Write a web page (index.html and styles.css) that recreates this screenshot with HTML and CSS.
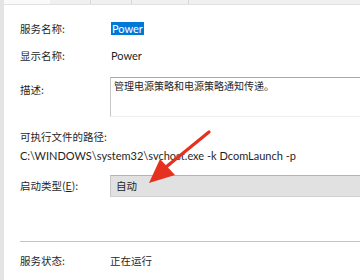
FILE: index.html
```html
<!DOCTYPE html>
<html lang="zh-CN">
<head>
    <meta charset="UTF-8">
    <title>Power 的属性</title>
    <link rel="stylesheet" href="styles.css">
</head>
<body>
    <div class="window">
        <div class="tabs">
            <span class="tab tab-active"></span>
            <span class="tab"></span>
            <span class="tab"></span>
            <span class="tab tab-wide"></span>
        </div>
        <div class="content">
            <div class="row row-name">
                <span class="label">服务名称:</span>
                <span class="value latin"><span class="selected">Power</span></span>
            </div>
            <div class="row row-display">
                <span class="label">显示名称:</span>
                <span class="value latin">Power</span>
            </div>
            <div class="row row-desc">
                <span class="label label-desc">描述:</span>
                <div class="desc-box">管理电源策略和电源策略通知传递。</div>
            </div>
            <div class="path-title">可执行文件的路径:</div>
            <div class="path latin">C:\WINDOWS\system32\svchost.exe -k DcomLaunch -p</div>
            <div class="row row-start">
                <span class="label">启动类型(<u>E</u>):</span>
                <div class="combo">自动</div>
            </div>
            <div class="sep"></div>
            <div class="row row-status">
                <span class="label">服务状态:</span>
                <span class="value status">正在运行</span>
            </div>
        </div>
        <svg class="arrow" width="360" height="280" viewBox="0 0 360 280">
            <path d="M209 132 L166 167" stroke="#e5321f" stroke-width="3.2" stroke-linecap="round"/>
            <polygon points="149,183 160,159 175,175" fill="#e5321f"/>
        </svg>
    </div>
</body>
</html>
```

FILE: styles.css
```css
body {
    margin: 0;
    background: #ffffff;
    font-family: "Noto Sans CJK SC", sans-serif;
    font-size: 10.5px;
    color: #1f1f1f;
}
.latin {
    font-family: Lato, "Noto Sans CJK SC", sans-serif;
    font-size: 11px;
}
.window {
    position: relative;
    width: 356px;
    height: 280px;
    border-left: 4px solid #e4e4e4;
    overflow: hidden;
}
.tabs {
    display: flex;
    height: 4px;
    background: #f0f0f0;
    border-bottom: 1px solid #e2e2e2;
}
.tab {
    width: 40px;
    border-right: 1px solid #d8d8d8;
}
.tab-active {
    width: 46px;
    background: #fafafa;
    border-right: none;
}
.tab-wide {
    width: 56px;
}
.content {
    padding-left: 16px;
}
.row {
    display: flex;
    line-height: 14px;
}
.label {
    width: 90px;
    flex-shrink: 0;
}
.value {
    padding-left: 1px;
}
.selected {
    background: #0078d7;
    color: #ffffff;
    padding: 0 1px;
}
.row-name {
    margin-top: 17px;
}
.row-display {
    margin-top: 13px;
}
.row-desc {
    margin-top: 14px;
}
.label-desc {
    margin-top: 6px;
}
.desc-box {
    flex: 1;
    height: 36px;
    border-top: 1px solid #a8a8a8;
    border-left: 1px solid #c6c6c6;
    border-bottom: 1px solid #efefef;
    padding: 1px 3px;
    font-size: 10px;
    line-height: 14px;
}
.path-title {
    margin-top: 13px;
    line-height: 14px;
}
.path {
    margin-top: 5px;
    line-height: 14px;
}
.row-start {
    margin-top: 12px;
    align-items: center;
}
.combo {
    flex: 1;
    height: 20px;
    line-height: 20px;
    padding-left: 5px;
    background: #e1e1e1;
    border-top: 1px solid #b4b4b4;
    border-left: 1px solid #c8c8c8;
    border-bottom: 1px solid #d0d0d0;
}
.sep {
    margin-top: 44px;
    height: 1px;
    background: #c4c4c4;
}
.row-status {
    margin-top: 12px;
}
.status {
    padding-left: 0;
}
.arrow {
    position: absolute;
    left: -4px;
    top: 0;
}
```
